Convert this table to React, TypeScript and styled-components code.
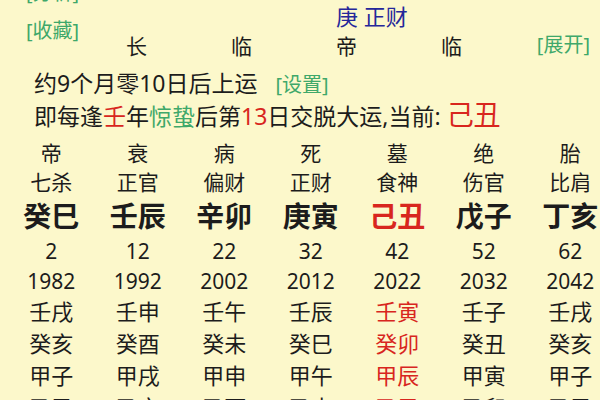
import React from "react";
import styled, { createGlobalStyle } from "styled-components";

const GlobalStyle = createGlobalStyle`
  html, body { margin: 0; padding: 0; }
  body {
    background: #fcf8cb;
    font-family: "Noto Sans", "Noto Sans CJK SC", sans-serif;
    color: #1c1c1c;
  }
`;

const Page = styled.div`
  width: 600px;
  height: 400px;
  overflow: hidden;
  background: #fcf8cb;
`;

const Header = styled.div`
  display: grid;
  grid-template-columns: 84px repeat(4, 105px) 1fr;
  grid-template-rows: 18px 26px 30px;
  margin-top: -15px;
`;

const Link = styled.span<{ $size?: number }>`
  color: #3fa86a;
  font-size: ${(p) => p.$size ?? 20}px;
  white-space: nowrap;
`;

const TopLink = styled.div`
  grid-column: 1;
  grid-row: 1;
  padding-left: 26px;
  line-height: 16px;
`;

const SideLink = styled.div`
  grid-column: 1;
  grid-row: 2 / span 2;
  padding-left: 26px;
  padding-top: 15px;
  line-height: 26px;
`;

const MainStar = styled.div`
  grid-column: 4 / span 2;
  grid-row: 2;
  padding-left: 42px;
  color: #25279a;
  font-size: 22px;
  line-height: 26px;
  white-space: nowrap;
`;

const Stage = styled.div<{ $col: number }>`
  grid-column: ${(p) => p.$col};
  grid-row: 3;
  text-align: center;
  font-size: 21px;
  line-height: 26px;
  padding-top: 4px;
`;

const ExpandCell = styled.div`
  grid-column: 6;
  grid-row: 3;
  text-align: right;
  padding-right: 10px;
  line-height: 26px;
  padding-top: 3px;
`;

const InfoLine = styled.div<{ $mt?: number }>`
  display: flex;
  align-items: baseline;
  padding-left: 34px;
  height: 32px;
  line-height: 32px;
  margin-top: ${(p) => p.$mt ?? 0}px;
  font-size: 23px;
  white-space: nowrap;
`;

const Red = styled.span<{ $size?: number }>`
  color: #d8261e;
  font-size: ${(p) => (p.$size ? `${p.$size}px` : "inherit")};
`;

const Green = styled.span`
  color: #3fa86a;
`;

const SetLink = styled(Link)`
  margin-left: 18px;
`;

const Table = styled.div`
  margin-top: 8px;
  padding-left: 8px;
`;

const Row = styled.div<{ $h: number; $size: number; $bold?: boolean }>`
  display: grid;
  grid-template-columns: repeat(7, 86.5px);
  height: ${(p) => p.$h}px;
  line-height: ${(p) => p.$h}px;
  font-size: ${(p) => p.$size}px;
  font-weight: ${(p) => (p.$bold ? 700 : 400)};
`;

const Cell = styled.div<{ $red?: boolean }>`
  text-align: center;
  white-space: nowrap;
  color: ${(p) => (p.$red ? "#d8261e" : "#1c1c1c")};
`;

type Col = {
  stage: string;
  god: string;
  gz: string;
  age: number;
  year: number;
  liu: string[];
  cur?: boolean;
};

const cols: Col[] = [
  { stage: "帝", god: "七杀", gz: "癸巳", age: 2, year: 1982, liu: ["壬戌", "癸亥", "甲子", "乙丑"] },
  { stage: "衰", god: "正官", gz: "壬辰", age: 12, year: 1992, liu: ["壬申", "癸酉", "甲戌", "乙亥"] },
  { stage: "病", god: "偏财", gz: "辛卯", age: 22, year: 2002, liu: ["壬午", "癸未", "甲申", "乙酉"] },
  { stage: "死", god: "正财", gz: "庚寅", age: 32, year: 2012, liu: ["壬辰", "癸巳", "甲午", "乙未"] },
  { stage: "墓", god: "食神", gz: "己丑", age: 42, year: 2022, liu: ["壬寅", "癸卯", "甲辰", "乙巳"], cur: true },
  { stage: "绝", god: "伤官", gz: "戊子", age: 52, year: 2032, liu: ["壬子", "癸丑", "甲寅", "乙卯"] },
  { stage: "胎", god: "比肩", gz: "丁亥", age: 62, year: 2042, liu: ["壬戌", "癸亥", "甲子", "乙丑"] },
];

export default function App() {
  return (
    <>
      <GlobalStyle />
      <Page>
        <Header>
          <TopLink>
            <Link>[分析]</Link>
          </TopLink>
          <SideLink>
            <Link>[收藏]</Link>
          </SideLink>
          <MainStar>庚 正财</MainStar>
          <Stage $col={2}>长</Stage>
          <Stage $col={3}>临</Stage>
          <Stage $col={4}>帝</Stage>
          <Stage $col={5}>临</Stage>
          <ExpandCell>
            <Link>[展开]</Link>
          </ExpandCell>
        </Header>

        <InfoLine $mt={8}>
          约9个月零10日后上运
          <SetLink>[设置]</SetLink>
        </InfoLine>
        <InfoLine>
          即每逢<Red>壬</Red>年<Green>惊蛰</Green>后第<Red>13</Red>日交脱大运,当前:&nbsp;
          <Red $size={27}>己丑</Red>
        </InfoLine>

        <Table>
          <Row $h={29} $size={21}>
            {cols.map((c, i) => (
              <Cell key={i}>{c.stage}</Cell>
            ))}
          </Row>
          <Row $h={29} $size={21}>
            {cols.map((c, i) => (
              <Cell key={i}>{c.god}</Cell>
            ))}
          </Row>
          <Row $h={38} $size={28} $bold>
            {cols.map((c, i) => (
              <Cell key={i} $red={c.cur}>
                {c.gz}
              </Cell>
            ))}
          </Row>
          <Row $h={32} $size={21}>
            {cols.map((c, i) => (
              <Cell key={i}>{c.age}</Cell>
            ))}
          </Row>
          <Row $h={28} $size={21}>
            {cols.map((c, i) => (
              <Cell key={i}>{c.year}</Cell>
            ))}
          </Row>
          {[0, 1, 2, 3].map((r) => (
            <Row key={r} $h={32} $size={22}>
              {cols.map((c, i) => (
                <Cell key={i} $red={c.cur}>
                  {c.liu[r]}
                </Cell>
              ))}
            </Row>
          ))}
        </Table>
      </Page>
    </>
  );
}
